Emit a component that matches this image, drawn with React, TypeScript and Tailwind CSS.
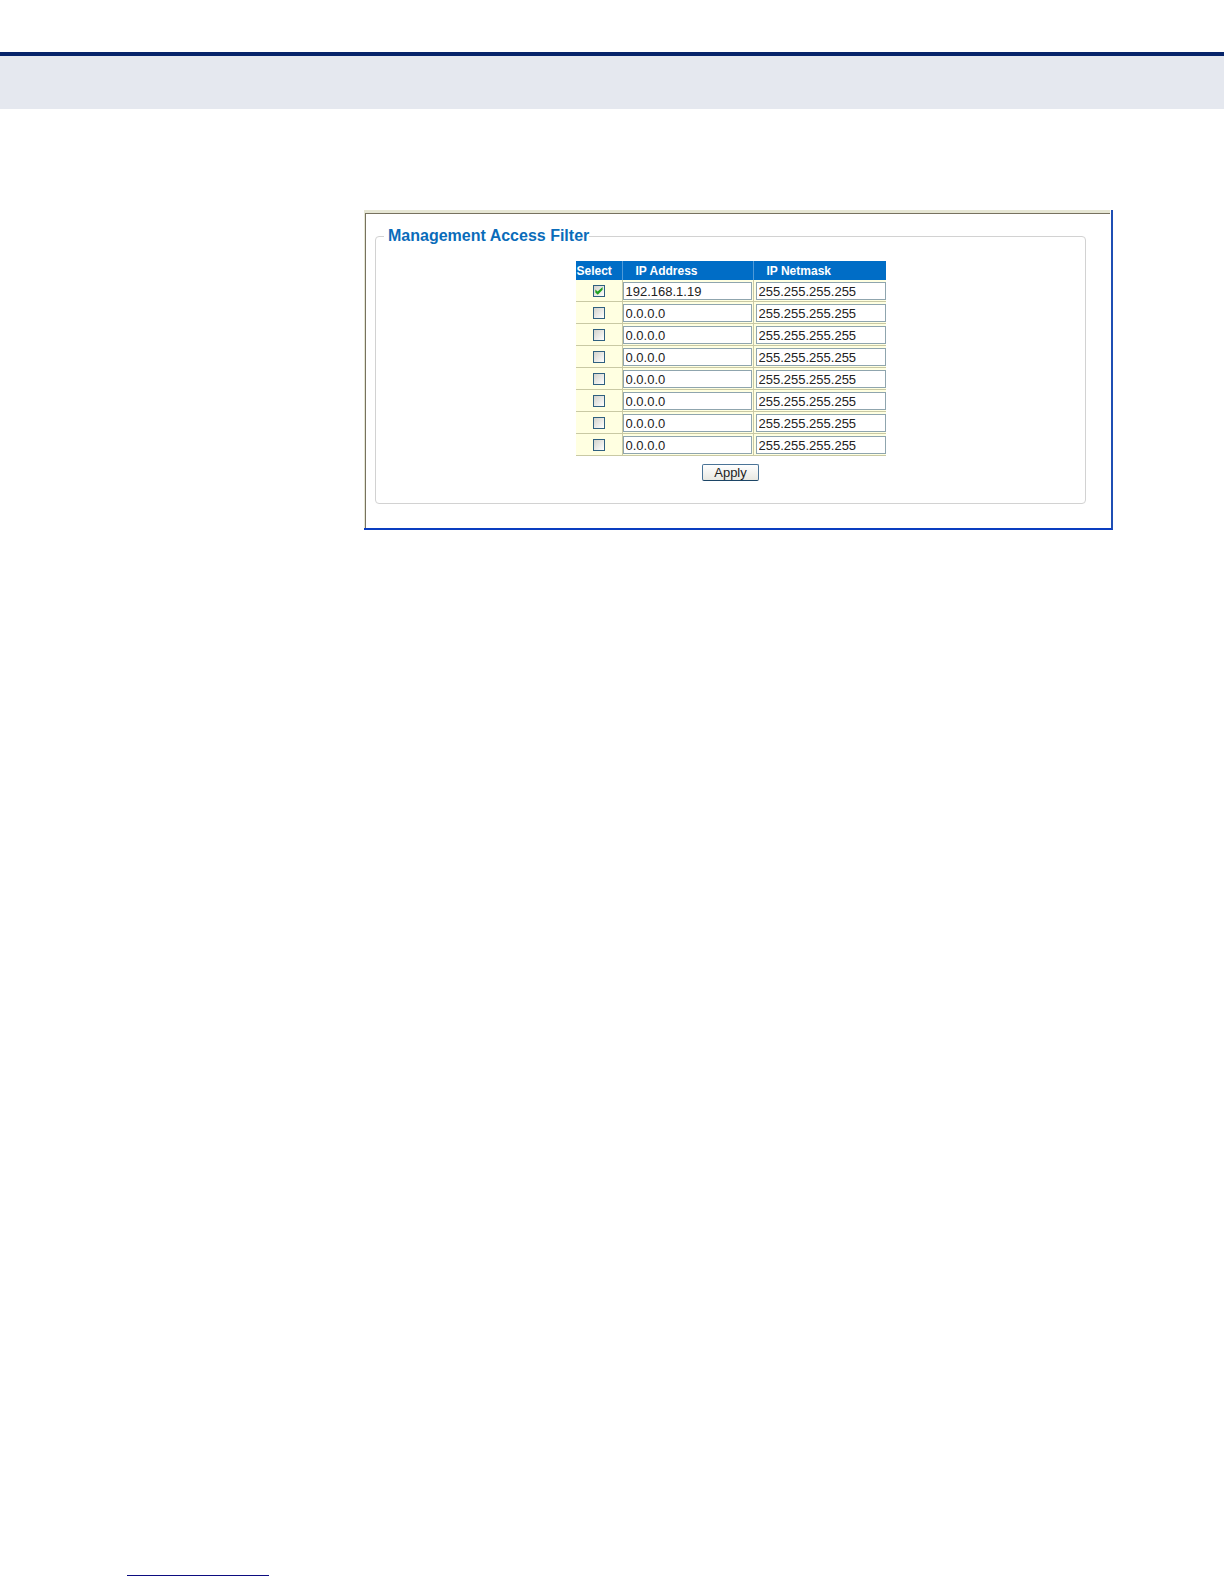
import { useState } from 'react';

interface FilterRow {
    enabled: boolean;
    address: string;
    netmask: string;
}

const emptyRow: FilterRow = { enabled: false, address: '0.0.0.0', netmask: '255.255.255.255' };

const initialRows: FilterRow[] = [
    { enabled: true, address: '192.168.1.19', netmask: '255.255.255.255' },
    ...Array.from({ length: 7 }, () => ({ ...emptyRow })),
];

interface SelectBoxProps {
    checked: boolean;
    label: string;
    onChange: (checked: boolean) => void;
}

function SelectBox({ checked, label, onChange }: SelectBoxProps) {
    return (
        <span className="relative block w-3 h-3 mx-auto">
            <input
                type="checkbox"
                aria-label={label}
                checked={checked}
                onChange={e => onChange(e.target.checked)}
                className="block w-3 h-3 appearance-none border border-[#2f6080] bg-linear-to-br from-[#d2d2cc] to-white"
            />
            {checked && (
                <svg className="absolute inset-0 pointer-events-none" width="12" height="12" viewBox="0 0 12 12">
                    <path d="M2.3 4.5 L4.6 6.5 L9.6 2 V4.8 L4.8 9.8 L2.3 7.4 Z" fill="#21a121" />
                </svg>
            )}
        </span>
    );
}

interface AddressInputProps {
    value: string;
    label: string;
    onChange: (value: string) => void;
}

function AddressInput({ value, label, onChange }: AddressInputProps) {
    return (
        <input
            type="text"
            aria-label={label}
            value={value}
            onChange={e => onChange(e.target.value)}
            className="block w-full h-[18px] px-[2px] border border-[#8fa5ae] bg-white text-[13px] leading-4 text-[#222] outline-none"
        />
    );
}

export default function App() {
    const [rows, setRows] = useState(initialRows);

    const updateRow = (index: number, patch: Partial<FilterRow>) => {
        setRows(rows.map((row, i) => (i === index ? { ...row, ...patch } : row)));
    };

    return (
        <div className="flex flex-col min-h-screen bg-white font-['Liberation_Sans',Arial,sans-serif]">
            {/* Page header band */}
            <header className="mt-[52px] h-[57px] border-t-4 border-[#06246a] bg-[#e5e8ef]" />

            <main className="mt-[101px] ml-[364px] mr-[111px] border-r-2 border-b-2 border-r-[#1f4fb4] border-b-[#0a3dc0]">
                <div className="mr-px border-t-[3px] border-l border-[#e6e6d4]">
                    <form
                        onSubmit={e => e.preventDefault()}
                        className="border-t border-l border-[#77725f] pt-3 pl-[9px] pr-6 pb-6"
                    >
                        <fieldset className="min-w-0 rounded border border-[#d2d2d2] pb-[22px]">
                            <legend className="ml-2 pl-1 text-base leading-5 font-bold text-[#0a6cba]">
                                Management Access Filter
                            </legend>

                            <table className="mt-[15px] mx-auto w-[310px] table-fixed border-separate border-spacing-0">
                                <thead>
                                    <tr className="h-[19px] bg-[#006dc6] text-xs leading-4 font-bold text-white text-left">
                                        <th className="w-[47px] p-0 pl-px border-r border-[#4f9ad8]">Select</th>
                                        <th className="w-[131px] p-0 pl-[13px] border-r border-[#4f9ad8]">IP Address</th>
                                        <th className="p-0 pl-[13px]">IP Netmask</th>
                                    </tr>
                                </thead>
                                <tbody>
                                    {rows.map((row, i) => (
                                        <tr key={i} className="h-[22px] bg-[#ffffe1]">
                                            <td className="p-0 border-r border-b border-[#c9c9a4]">
                                                <SelectBox
                                                    checked={row.enabled}
                                                    label={`Select filter ${i + 1}`}
                                                    onChange={enabled => updateRow(i, { enabled })}
                                                />
                                            </td>
                                            <td className="p-0 pt-[2px] pb-px pr-px border-r border-b border-[#c9c9a4]">
                                                <AddressInput
                                                    value={row.address}
                                                    label={`IP address ${i + 1}`}
                                                    onChange={address => updateRow(i, { address })}
                                                />
                                            </td>
                                            <td className="p-0 pt-[2px] pb-px pl-[2px] border-b border-[#c9c9a4]">
                                                <AddressInput
                                                    value={row.netmask}
                                                    label={`IP netmask ${i + 1}`}
                                                    onChange={netmask => updateRow(i, { netmask })}
                                                />
                                            </td>
                                        </tr>
                                    ))}
                                </tbody>
                            </table>

                            <button
                                type="submit"
                                className="block mt-2 mx-auto w-[57px] h-[17px] rounded-[2px] border border-[#4a7396] border-b-[#1c4566] bg-linear-to-b from-white to-[#e8e8e2] text-[13px] leading-[14px] text-[#222]"
                            >
                                Apply
                            </button>
                        </fieldset>
                    </form>
                </div>
            </main>

            {/* Footer rule */}
            <footer className="mt-auto pb-2 pl-[127px]">
                <div className="w-[142px] border-t border-[#0c0c80]" />
            </footer>
        </div>
    );
}
